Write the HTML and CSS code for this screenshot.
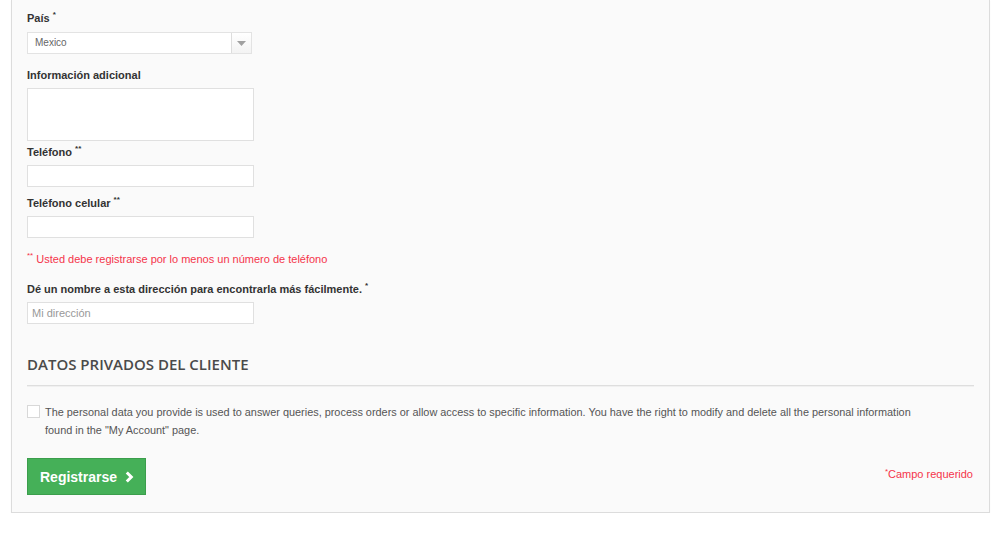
FILE: index.html
```html
<!DOCTYPE html>
<html lang="es">
<head>
<meta charset="utf-8">
<title>Registro</title>
<link rel="stylesheet" href="styles.css">
</head>
<body>
<div class="panel">
  <div class="field f-pais">
    <label class="lbl">País <sup>*</sup></label>
    <div class="select">
      <span class="select-val">Mexico</span>
      <span class="select-btn"><svg width="9" height="5" viewBox="0 0 9 5"><path d="M0 0H9L4.5 5Z" fill="#a0a0a0"/></svg></span>
    </div>
  </div>
  <div class="field f-info">
    <label class="lbl">Información adicional</label>
    <div class="textarea"></div>
  </div>
  <div class="field f-tel">
    <label class="lbl">Teléfono <sup>**</sup></label>
    <div class="input"></div>
  </div>
  <div class="field f-cel">
    <label class="lbl">Teléfono celular <sup>**</sup></label>
    <div class="input"></div>
  </div>
  <p class="note"><sup>**</sup> Usted debe registrarse por lo menos un número de teléfono</p>
  <div class="field f-alias">
    <label class="lbl">Dé un nombre a esta dirección para encontrarla más fácilmente. <sup>*</sup></label>
    <div class="input"><span class="ph">Mi dirección</span></div>
  </div>
  <h3 class="heading">DATOS PRIVADOS DEL CLIENTE</h3>
  <div class="rule"></div>
  <div class="consent">
    <span class="checkbox"></span>
    <p class="consent-text">The personal data you provide is used to answer queries, process orders or allow access to specific information. You have the right to modify and delete all the personal information found in the "My Account" page.</p>
  </div>
  <div class="footer">
    <button class="btn" type="button">Registrarse <svg class="chev" width="9" height="12" viewBox="0 0 9 12"><path d="M1.8 1.5L6.3 6L1.8 10.5" fill="none" stroke="#fff" stroke-width="3"/></svg></button>
    <span class="required"><sup>*</sup>Campo requerido</span>
  </div>
</div>
</body>
</html>
```

FILE: styles.css
```css
* { box-sizing: border-box; }
html, body { margin: 0; padding: 0; background: #fff; }
body { font-family: "Liberation Sans", Arial, sans-serif; font-size: 11px; color: #333; }

.panel {
  margin: 0 10px 0 11px;
  border: 1px solid #dcdcdc;
  border-top: none;
  background: #fafafa;
  padding: 9px 15px 17px 15px;
  box-shadow: 0 1px 1px rgba(0,0,0,0.05);
  display: flex;
  flex-direction: column;
}

.field { display: flex; flex-direction: column; align-items: flex-start; gap: 4px; }
.f-pais { gap: 5px; }
.f-info { margin-top: 12px; }
.f-tel { margin-top: 2px; }
.f-cel { margin-top: 7px; }
.f-alias { margin-top: 12px; }

.lbl { font-weight: bold; line-height: 18px; color: #333; }
sup { font-size: 8px; vertical-align: top; position: relative; top: -3px; font-weight: bold; }

.select {
  width: 225px; height: 22px;
  background: #fff;
  border: 1px solid #e3e3e3;
  display: flex; align-items: stretch;
}
.select-val { flex: 1; padding-left: 7px; line-height: 20px; color: #666; font-size: 10px; }
.select-btn {
  width: 20px; border-left: 1px solid #ddd;
  background: linear-gradient(#fff, #f3f3f3);
  display: flex; align-items: center; justify-content: center;
}

.textarea { width: 227px; height: 53px; background: #fff; border: 1px solid #e0e0e0; }
.input { width: 227px; height: 22px; background: #fff; border: 1px solid #e0e0e0; padding-left: 4px; line-height: 21px; }
.ph { color: #999; font-size: 11px; }

.note { margin: 12px 0 0; line-height: 18px; color: #f5344a; }
.note sup { font-weight: normal; }

.heading {
  margin: 29px 0 0;
  font-family: "Open Sans", sans-serif;
  font-weight: 600;
  font-size: 15px;
  line-height: 22px;
  color: #4a4a4a;
}
.rule { margin-top: 10px; height: 1px; background: #dedede; box-shadow: 0 1px 0 #f0f0f0; }

.consent { display: flex; align-items: flex-start; gap: 5px; margin-top: 17px; }
.checkbox { flex: none; width: 13px; height: 13px; margin-top: 2px; background: #fff; border: 1px solid #d8d8d8; }
.consent-text { margin: 0; width: 880px; line-height: 18px; color: #555; font-size: 10.9px; }

.footer { display: flex; justify-content: space-between; align-items: center; margin-top: 19px; }
.btn {
  height: 37px; width: 119px;
  background: #45b058;
  border: 1px solid #3b9e4c;
  color: #fff;
  font-family: "Liberation Sans", Arial, sans-serif;
  font-weight: bold; font-size: 14px;
  padding: 0 0 0 12px;
  display: flex; align-items: center; gap: 8px;
  cursor: pointer;
}
.chev { flex: none; }
.required { color: #f5344a; line-height: 18px; margin-top: -6px; margin-right: 1px; }
.required sup { font-weight: normal; top: -2px; }
```
